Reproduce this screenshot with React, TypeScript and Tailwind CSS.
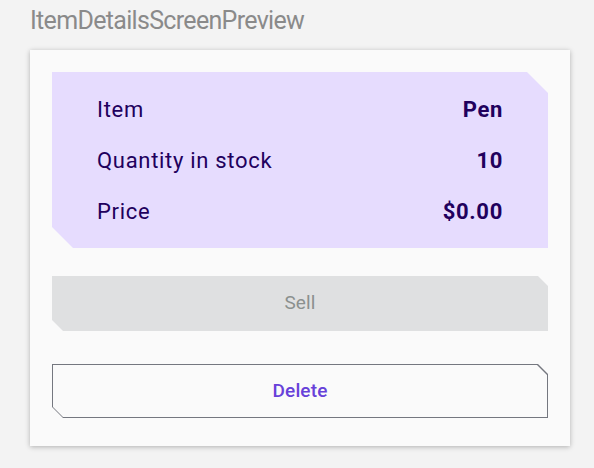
import React from "react";

const rows = [
  { label: "Item", value: "Pen" },
  { label: "Quantity in stock", value: "10" },
  { label: "Price", value: "$0.00" },
];

function App() {
  return (
    <div className="w-[594px] h-[468px] bg-[#f3f3f3] font-['Roboto',sans-serif] overflow-hidden">
      <p className="pl-[30px] pt-[5px] text-[25px] leading-[32px] tracking-[-0.68px] text-[#8a8a8a]">ItemDetailsScreenPreview</p>
      <div className="ml-[30px] mt-[13px] w-[540px] h-[396px] bg-[#fafafa] shadow-[0_1px_5px_rgba(0,0,0,0.28)] p-[22px] flex flex-col">
        <div className="h-[176px] bg-[#e6dcfe] px-[45px] flex flex-col justify-center text-[#21005d] text-[22px] tracking-[0.69px] [clip-path:polygon(0_0,calc(100%_-_21px)_0,100%_21px,100%_100%,21px_100%,0_calc(100%_-_21px))]">
          {rows.map((r) => (
            <div key={r.label} className="h-[51px] flex items-center justify-between">
              <span>{r.label}</span>
              <span className="font-bold">{r.value}</span>
            </div>
          ))}
        </div>
        <div className="mt-[28px] h-[55px] bg-[#dfe0e1] flex items-center justify-center text-[19px] tracking-[0.14px] text-[#8b908e] [clip-path:polygon(0_0,calc(100%_-_10px)_0,100%_10px,100%_100%,11px_100%,0_calc(100%_-_11px))]">
          Sell
        </div>
        <div className="mt-[33px] h-[54px] bg-[#74777f] p-px [clip-path:polygon(0_0,calc(100%_-_10px)_0,100%_10px,100%_100%,11px_100%,0_calc(100%_-_11px))]">
          <div className="h-full bg-[#fafafa] flex items-center justify-center text-[19px] tracking-[0.14px] font-medium text-[#6741d9] [clip-path:polygon(0_0,calc(100%_-_10px)_0,100%_10px,100%_100%,10px_100%,0_calc(100%_-_10px))]">
            Delete
          </div>
        </div>
      </div>
    </div>
  );
}

export default App;
